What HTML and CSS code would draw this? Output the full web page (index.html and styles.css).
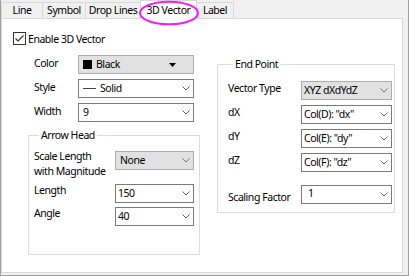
FILE: index.html
```html
<!DOCTYPE html>
<html>
<head>
<meta charset="utf-8">
<link rel="stylesheet" href="styles.css">
</head>
<body>
<div class="window">
  <div class="tabs">
    <div class="tab t1">Line</div>
    <div class="tab t2">Symbol</div>
    <div class="tab t3">Drop Lines</div>
    <div class="tab t4 active">3D Vector</div>
    <div class="tab t5">Label</div>
  </div>
  <div class="panel">
    <div class="check-row">
      <span class="checkbox"><svg width="11" height="11" viewBox="0 0 11 11"><polyline points="1.5,5.5 4,8 9.5,2.5" fill="none" stroke="#333" stroke-width="1.2"/></svg></span>
      <span class="check-text">Enable 3D Vector</span>
    </div>
    <div class="cols">
      <div class="left">
        <div class="row">
          <span class="lbl">Color</span>
          <div class="combo gray wide">
            <span class="swatch"></span>
            <span class="ctext color-text">Black</span>
            <svg class="tri" width="7" height="4" viewBox="0 0 7 4"><polygon points="0,0 7,0 3.5,4" fill="#000"/></svg>
          </div>
        </div>
        <div class="row">
          <span class="lbl">Style</span>
          <div class="combo wide">
            <span class="dash"></span>
            <span class="ctext">Solid</span>
            <svg class="chev" width="8" height="5" viewBox="0 0 8 5"><polyline points="0.5,0.5 4,4 7.5,0.5" fill="none" stroke="#606060" stroke-width="1"/></svg>
          </div>
        </div>
        <div class="row last">
          <span class="lbl">Width</span>
          <div class="combo wide">
            <span class="ctext pad5">9</span>
            <svg class="chev" width="8" height="5" viewBox="0 0 8 5"><polyline points="0.5,0.5 4,4 7.5,0.5" fill="none" stroke="#606060" stroke-width="1"/></svg>
          </div>
        </div>
        <fieldset class="group arrow">
          <legend>Arrow Head</legend>
          <div class="row scale">
            <span class="lbl">Scale Length<br>with Magnitude</span>
            <div class="combo gray mid">
              <span class="ctext pad5">None</span>
              <svg class="chev" width="8" height="5" viewBox="0 0 8 5"><polyline points="0.5,0.5 4,4 7.5,0.5" fill="none" stroke="#707070" stroke-width="1"/></svg>
            </div>
          </div>
          <div class="row len">
            <span class="lbl">Length</span>
            <div class="combo mid">
              <span class="ctext pad2">150</span>
              <svg class="chev" width="8" height="5" viewBox="0 0 8 5"><polyline points="0.5,0.5 4,4 7.5,0.5" fill="none" stroke="#606060" stroke-width="1"/></svg>
            </div>
          </div>
          <div class="row ang">
            <span class="lbl">Angle</span>
            <div class="combo mid">
              <span class="ctext pad2">40</span>
              <svg class="chev" width="8" height="5" viewBox="0 0 8 5"><polyline points="0.5,0.5 4,4 7.5,0.5" fill="none" stroke="#606060" stroke-width="1"/></svg>
            </div>
          </div>
        </fieldset>
      </div>
      <fieldset class="group end">
        <legend>End Point</legend>
        <div class="row">
          <span class="lbl">Vector Type</span>
          <div class="combo gray narrow">
            <span class="ctext pad2">XYZ dXdYdZ</span>
            <svg class="chev" width="8" height="5" viewBox="0 0 8 5"><polyline points="0.5,0.5 4,4 7.5,0.5" fill="none" stroke="#707070" stroke-width="1"/></svg>
          </div>
        </div>
        <div class="row">
          <span class="lbl">dX</span>
          <div class="combo narrow">
            <span class="ctext pad2">Col(D): "dx"</span>
            <svg class="chev" width="8" height="5" viewBox="0 0 8 5"><polyline points="0.5,0.5 4,4 7.5,0.5" fill="none" stroke="#606060" stroke-width="1"/></svg>
          </div>
        </div>
        <div class="row">
          <span class="lbl">dY</span>
          <div class="combo narrow">
            <span class="ctext pad2">Col(E): "dy"</span>
            <svg class="chev" width="8" height="5" viewBox="0 0 8 5"><polyline points="0.5,0.5 4,4 7.5,0.5" fill="none" stroke="#606060" stroke-width="1"/></svg>
          </div>
        </div>
        <div class="row dz">
          <span class="lbl">dZ</span>
          <div class="combo narrow">
            <span class="ctext pad2">Col(F): "dz"</span>
            <svg class="chev" width="8" height="5" viewBox="0 0 8 5"><polyline points="0.5,0.5 4,4 7.5,0.5" fill="none" stroke="#606060" stroke-width="1"/></svg>
          </div>
        </div>
        <div class="row sf">
          <span class="lbl">Scaling Factor</span>
          <div class="combo narrow">
            <span class="ctext pad6">1</span>
            <svg class="chev" width="8" height="5" viewBox="0 0 8 5"><polyline points="0.5,0.5 4,4 7.5,0.5" fill="none" stroke="#606060" stroke-width="1"/></svg>
          </div>
        </div>
      </fieldset>
    </div>
  </div>
  <svg class="highlight" width="62" height="27" viewBox="0 0 62 27"><ellipse cx="31" cy="13" rx="29" ry="11.3" fill="none" stroke="#f020f0" stroke-width="2"/></svg>
</div>
</body>
</html>
```

FILE: styles.css
```css
body {
  margin: 0;
  font-family: "Noto Sans", "Open Sans", sans-serif;
  font-size: 10.5px;
  letter-spacing: -0.45px;
  color: #000;
}

.window {
  position: relative;
  box-sizing: border-box;
  width: 409px;
  height: 276px;
  background: #f0f0f0;
  border-left: 1px solid #a0a0a0;
  border-right: 1px solid #a0a0a0;
  border-bottom: 1px solid #a0a0a0;
  padding: 0 5px 2px 0;
}

.tabs {
  display: flex;
  align-items: flex-end;
  height: 18px;
  position: relative;
  z-index: 1;
}

.tab {
  box-sizing: border-box;
  height: 16px;
  border: 1px solid #d9d9d9;
  border-bottom: none;
  margin-left: -1px;
  text-align: center;
  line-height: 14px;
  background: #f0f0f0;
}

.t1 { width: 42px; margin-left: 0; }
.t2 { width: 44px; }
.t3 { width: 56px; }
.t4 { width: 57px; }
.t5 { width: 38px; }

.tab.active {
  height: 19px;
  margin-bottom: -1px;
  background: #fff;
  line-height: 18px;
}

.panel {
  box-sizing: border-box;
  height: 255px;
  background: #fff;
  border: 1px solid #d9d9d9;
}

.check-row {
  display: flex;
  align-items: center;
  height: 13px;
  margin: 13px 0 0 11px;
}

.checkbox {
  box-sizing: border-box;
  width: 13px;
  height: 13px;
  border: 1px solid #333;
  display: flex;
  align-items: center;
  justify-content: center;
  background: #fff;
}

.check-text {
  margin-left: 2px;
}

.cols {
  display: flex;
  align-items: flex-start;
  margin-top: 10px;
  padding-left: 26px;
}

.left {
  width: 172px;
}

.row {
  display: flex;
  align-items: flex-start;
  margin-bottom: 5px;
}

.left > .row {
  padding-left: 6px;
}

.row.last {
  margin-bottom: 0;
}

.lbl {
  line-height: 17px;
  white-space: nowrap;
}

.left > .row .lbl { width: 44px; }

.combo {
  box-sizing: border-box;
  height: 19px;
  border: 1px solid #7a7a7a;
  background: #fff;
  display: flex;
  align-items: center;
  line-height: 17px;
  flex: none;
  white-space: nowrap;
}

.combo.gray {
  background: #e1e1e1;
  border-color: #adadad;
}

.wide { width: 116px; }
.mid { width: 79px; }
.narrow { width: 91px; }

.swatch {
  width: 9px;
  height: 9px;
  background: #000;
  margin-left: 4px;
}

.color-text { margin-left: 6px; }

.dash {
  width: 13px;
  height: 1.5px;
  background: #444;
  margin-left: 4px;
}

.ctext { margin-left: 4px; }
.ctext.pad5 { margin-left: 4px; }
.ctext.pad2 { margin-left: 2px; }
.ctext.pad6 { margin-left: 6px; margin-top: -3px; }

.tri {
  margin-left: auto;
  margin-right: 17px;
}

.chev {
  margin-left: auto;
  margin-right: 3px;
}

.group {
  box-sizing: border-box;
  margin: 0;
  border: 1px solid #dcdcdc;
  min-width: 0;
}

.group legend {
  padding: 0 2px;
  margin-left: 5px;
  line-height: 14px;
}

.arrow {
  width: 172px;
  margin-top: 6px;
  padding: 9px 5px 28px 5px;
}

.arrow .row .lbl {
  width: 81px;
  line-height: 12px;
}

.arrow .scale .lbl {
  line-height: 14.5px;
  margin-top: -2px;
}
.arrow .row.scale { margin-bottom: 0; }
.arrow .row.len { margin-top: 6px; margin-bottom: 4px; }
.arrow .row.ang { margin-bottom: 0; }

.end {
  width: 178px;
  margin-left: 17px;
  margin-top: 2px;
  padding: 10px 2px 8px 10px;
}

.end .lbl {
  width: 73px;
  line-height: 14px;
}

.end .row.dz { margin-bottom: 13px; }
.end .row.sf { margin-bottom: 0; }
.end .row.sf .lbl { padding-top: 5px; }

.highlight {
  position: absolute;
  left: 137px;
  top: 0;
  z-index: 2;
}
```
